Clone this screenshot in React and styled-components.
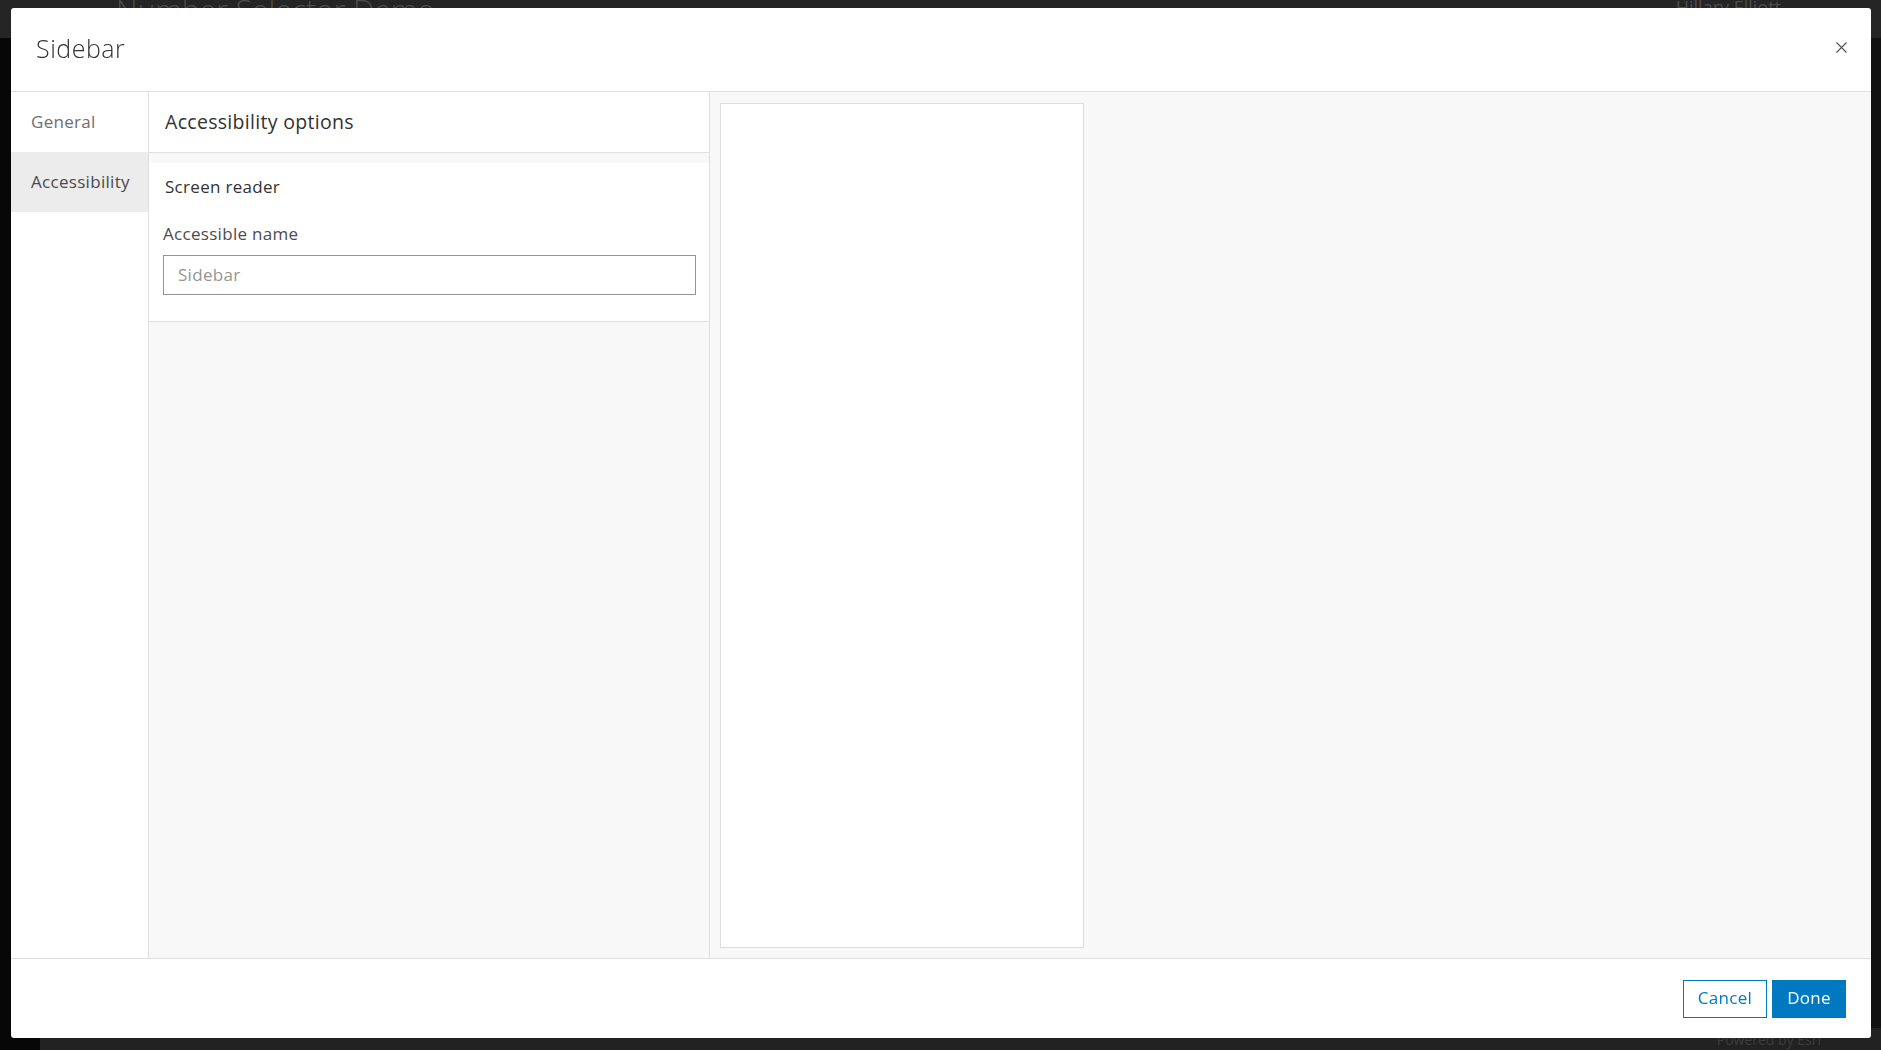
import styled, { createGlobalStyle } from 'styled-components';

const GlobalStyle = createGlobalStyle`
  html, body {
    margin: 0;
    padding: 0;
    width: 100%;
    height: 100%;
    overflow: hidden;
    background: #0a0a0a;
    font-family: "Open Sans", "Noto Sans", sans-serif;
  }
  * { box-sizing: border-box; }
`;

/* the app that sits behind the modal */
const AppShell = styled.div`
  width: 1881px;
  height: 1050px;
  display: grid;
  grid-template-columns: 40px 1fr;
  grid-template-rows: 38px 1fr 22px;
  background: #0a0a0a;
`;

const AppHeader = styled.header`
  grid-column: 1 / 3;
  display: flex;
  align-items: flex-start;
  gap: 50px;
  padding: 0 20px 0 10px;
  background: #2a2a2a;
  color: #555;
`;

const AppTitle = styled.div`
  font-size: 30px;
  font-weight: 300;
  line-height: 20px;
  margin-left: 106px;
  flex: 1;
`;

const AppUser = styled.div`
  font-size: 18px;
  line-height: 14px;
  margin-right: 80px;
`;

const AppRail = styled.nav`
  background: #080808;
`;

const AppMain = styled.main`
  background: #141414;
`;

const AppFooter = styled.footer`
  grid-column: 2 / 3;
  display: flex;
  justify-content: flex-end;
  align-items: center;
  padding: 0 60px;
  background: #262626;
  color: #444;
  font-size: 14px;
`;

const Backdrop = styled.div`
  position: fixed;
  inset: 0;
  display: flex;
  padding: 8px 10px 12px 11px;
  background: rgba(0, 0, 0, 0.1);
`;

const Dialog = styled.section`
  flex: 1;
  display: flex;
  flex-direction: column;
  background: #fff;
  border-radius: 3px;
  overflow: hidden;
`;

const DialogHeader = styled.div`
  height: 84px;
  flex: none;
  display: flex;
  align-items: center;
  justify-content: space-between;
  padding: 0 25px 4px 25px;
  border-bottom: 1px solid #dfdfdf;
`;

const DialogTitle = styled.h2`
  margin: 0;
  font-size: 25px;
  font-weight: 300;
  letter-spacing: 0.5px;
  color: #323232;
`;

const CloseButton = styled.button`
  width: 20px;
  height: 20px;
  display: flex;
  align-items: center;
  justify-content: center;
  padding: 0;
  margin-right: -5px;
  border: none;
  background: none;
  cursor: pointer;
`;

const Body = styled.div`
  flex: 1;
  display: flex;
  min-height: 0;
  border-bottom: 1px solid #dfdfdf;
`;

const Nav = styled.div`
  width: 138px;
  flex: none;
  display: flex;
  flex-direction: column;
  border-right: 1px solid #dfdfdf;
  background: #fff;
`;

const NavItem = styled.div`
  height: 60px;
  display: flex;
  align-items: center;
  padding: 0 0 2px 20px;
  font-size: 17px;
  letter-spacing: 0.3px;
  color: ${p => (p.$active ? '#4a4a4a' : '#6e6e6e')};
  background: ${p => (p.$active ? '#ececec' : 'transparent')};
`;

const Settings = styled.div`
  width: 561px;
  flex: none;
  display: flex;
  flex-direction: column;
  background: #f8f8f8;
  border-right: 1px solid #dfdfdf;
`;

const SettingsHeader = styled.div`
  height: 61px;
  display: flex;
  align-items: center;
  padding: 0 0 2px 16px;
  background: #fff;
  border-bottom: 1px solid #dfdfdf;
  font-size: 19.5px;
  letter-spacing: 0.3px;
  color: #323232;
`;

const Section = styled.div`
  margin-top: 10px;
  background: #fff;
  border-bottom: 1px solid #dfdfdf;
  padding: 13px 13px 26px 14px;
`;

const SectionTitle = styled.div`
  font-size: 17px;
  letter-spacing: 0.3px;
  color: #323232;
  padding-left: 2px;
  line-height: 22px;
`;

const FieldLabel = styled.label`
  display: block;
  margin-top: 25px;
  font-size: 17px;
  letter-spacing: 0.3px;
  color: #4c4c4c;
  line-height: 22px;
`;

const TextInput = styled.input`
  display: block;
  width: 100%;
  height: 40px;
  margin-top: 10px;
  padding: 0 14px 2px 14px;
  border: 1px solid #959595;
  border-radius: 0;
  font-family: inherit;
  font-size: 17px;
  letter-spacing: 0.3px;
  color: #323232;
  outline: none;
  &::placeholder { color: #959595; }
`;

const Preview = styled.div`
  flex: 1;
  padding: 11px 10px 10px 10px;
  background: #f8f8f8;
  display: flex;
`;

const PreviewFrame = styled.div`
  width: 364px;
  background: #fff;
  border: 1px solid #dcdcdc;
`;

const Footer = styled.div`
  height: 79px;
  flex: none;
  display: flex;
  justify-content: flex-end;
  align-items: center;
  gap: 5px;
  padding-right: 25px;
`;

const Button = styled.button`
  height: 38px;
  min-width: ${p => (p.$primary ? '74px' : '84px')};
  padding: 0 12px 2px 12px;
  font-family: inherit;
  font-size: 17px;
  letter-spacing: 0.3px;
  border: 1px solid #0079c1;
  border-radius: 0;
  background: ${p => (p.$primary ? '#0079c1' : '#fff')};
  color: ${p => (p.$primary ? '#fff' : '#0079c1')};
  cursor: pointer;
`;

export default function App() {
  return (
    <>
      <GlobalStyle />
      <AppShell>
        <AppHeader>
          <AppTitle>Number Selector Demo</AppTitle>
          <AppUser>Hillary Elliott</AppUser>
        </AppHeader>
        <AppRail />
        <AppMain />
        <AppRail />
        <AppFooter>Powered by Esri</AppFooter>
      </AppShell>

      <Backdrop>
        <Dialog>
          <DialogHeader>
            <DialogTitle>Sidebar</DialogTitle>
            <CloseButton aria-label="Close">
              <svg width="11" height="11" viewBox="0 0 11 11">
                <path d="M0.5 0.5 L10.5 10.5 M10.5 0.5 L0.5 10.5" stroke="#555" strokeWidth="1.2" />
              </svg>
            </CloseButton>
          </DialogHeader>

          <Body>
            <Nav>
              <NavItem>General</NavItem>
              <NavItem $active>Accessibility</NavItem>
            </Nav>

            <Settings>
              <SettingsHeader>Accessibility options</SettingsHeader>
              <Section>
                <SectionTitle>Screen reader</SectionTitle>
                <FieldLabel>Accessible name</FieldLabel>
                <TextInput placeholder="Sidebar" />
              </Section>
            </Settings>

            <Preview>
              <PreviewFrame />
            </Preview>
          </Body>

          <Footer>
            <Button>Cancel</Button>
            <Button $primary>Done</Button>
          </Footer>
        </Dialog>
      </Backdrop>
    </>
  );
}
